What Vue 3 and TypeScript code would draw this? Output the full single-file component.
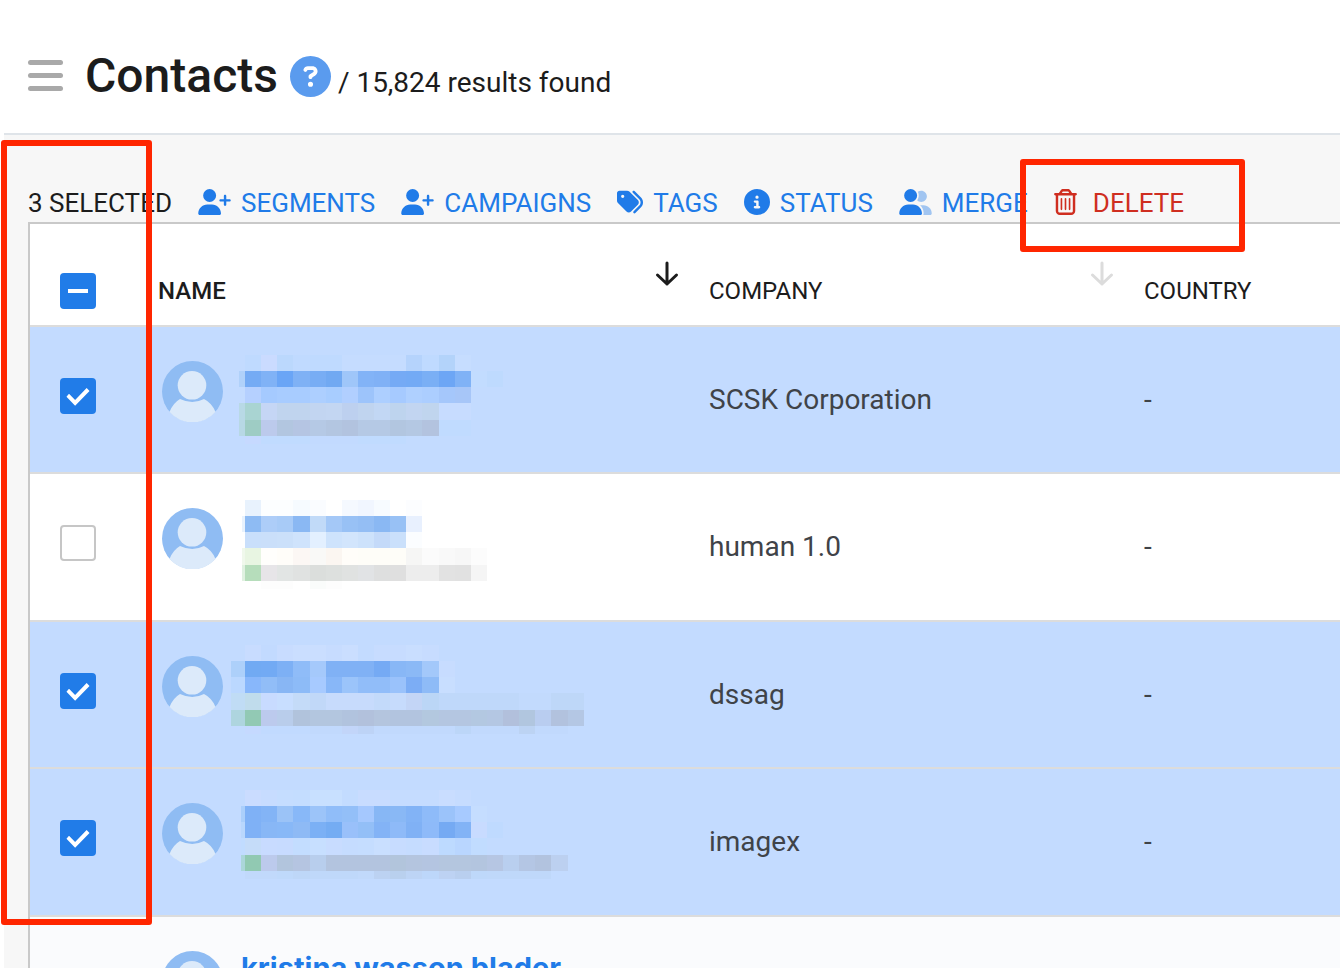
<script setup lang="ts">
import { computed, ref } from 'vue'

interface Mosaic {
  top: number
  lead: number
  leads: string[]
  rows: string[]
}
interface Contact {
  id: number
  name?: string
  company: string
  country: string
  selected: boolean
  mosaic?: Mosaic
}
interface Action {
  label: string
  icon: string
  width: number
  box: string
  path: string
  faded?: string
}
interface Tile {
  x: number
  y: number
  w: number
  h: number
  fill: string
}

const person =
  'M96 128a128 128 0 1 1 256 0A128 128 0 1 1 96 128zM0 482.3C0 383.8 79.8 304 178.3 304h91.4C368.2 304 448 383.8 448 482.3c0 16.4-13.3 29.7-29.7 29.7H29.7C13.3 512 0 498.7 0 482.3z'
const plus =
  'M504 312V248H440c-13.3 0-24-10.7-24-24s10.7-24 24-24h64V136c0-13.3 10.7-24 24-24s24 10.7 24 24v64h64c13.3 0 24 10.7 24 24s-10.7 24-24 24H552v64c0 13.3-10.7 24-24 24s-24-10.7-24-24z'

const actions: Action[] = [
  { label: 'SEGMENTS', icon: 'segments', width: 33, box: '0 0 640 512', path: person + plus },
  { label: 'CAMPAIGNS', icon: 'campaigns', width: 33, box: '0 0 640 512', path: person + plus },
  {
    label: 'TAGS',
    icon: 'tags',
    width: 26,
    box: '0 0 512 512',
    path: 'M345 39.1L472.8 168.4c52.4 53 52.4 138.2 0 191.2L360.8 472.9c-9.3 9.4-24.5 9.5-33.9 .2s-9.5-24.5-.2-33.9L438.6 325.9c33.9-34.3 33.9-89.4 0-123.7L310.9 72.9c-9.3-9.4-9.2-24.6 .2-33.9s24.6-9.2 33.9 .2zM0 229.5V80C0 53.5 21.5 32 48 32H197.5c17 0 33.3 6.7 45.3 18.7l168 168c25 25 25 65.5 0 90.5L277.3 442.7c-25 25-65.5 25-90.5 0l-168-168C6.7 262.7 0 246.5 0 229.5zM144 144a32 32 0 1 0 -64 0 32 32 0 1 0 64 0z',
  },
  {
    label: 'STATUS',
    icon: 'status',
    width: 26,
    box: '0 0 512 512',
    path: 'M256 512A256 256 0 1 0 256 0a256 256 0 1 0 0 512zM216 336h24V272H216c-13.3 0-24-10.7-24-24s10.7-24 24-24h48c13.3 0 24 10.7 24 24v88h8c13.3 0 24 10.7 24 24s-10.7 24-24 24H216c-13.3 0-24-10.7-24-24s10.7-24 24-24zm40-208a32 32 0 1 1 0 64 32 32 0 1 1 0-64z',
  },
  {
    label: 'MERGE',
    icon: 'merge',
    width: 33,
    box: '0 0 640 512',
    path: person,
    faded:
      'M609.3 512H471.4c5.4-9.4 8.6-20.3 8.6-32v-8c0-60.7-27.1-115.2-69.8-151.8c2.4-.1 4.7-.2 7.1-.2h61.4C567.8 320 640 392.2 640 481.3c0 17-13.8 30.7-30.7 30.7zM432 256c-31 0-59-12.6-79.3-32.9C372.4 196.5 384 163.6 384 128c0-26.8-6.6-52.1-18.3-74.3C384.3 40.1 407.2 32 432 32c61.9 0 112 50.1 112 112s-50.1 112-112 112z',
  },
  {
    label: 'DELETE',
    icon: 'delete',
    width: 23,
    box: '0 0 448 512',
    path: 'M170.5 51.6L151.5 80h145l-19-28.4c-1.5-2.2-4-3.6-6.7-3.6H177.1c-2.7 0-5.2 1.3-6.7 3.6zm147-26.6L354.2 80H368h48 8c13.3 0 24 10.7 24 24s-10.7 24-24 24h-8V432c0 44.2-35.8 80-80 80H112c-44.2 0-80-35.8-80-80V128H24c-13.3 0-24-10.7-24-24S10.7 80 24 80h8H80 93.8l36.7-55.1C140.9 9.4 158.4 0 177.1 0h93.7c18.7 0 36.2 9.4 46.6 24.9zM80 128V432c0 17.7 14.3 32 32 32H336c17.7 0 32-14.3 32-32V128H80zm80 64V400c0 8.8-7.2 16-16 16s-16-7.2-16-16V192c0-8.8 7.2-16 16-16s16 7.2 16 16zm80 0V400c0 8.8-7.2 16-16 16s-16-7.2-16-16V192c0-8.8 7.2-16 16-16s16 7.2 16 16zm80 0V400c0 8.8-7.2 16-16 16s-16-7.2-16-16V192c0-8.8 7.2-16 16-16s16 7.2 16 16z',
  },
]

// Each mosaic row lists tile colours from left to right; '-' leaves a tile empty.
const contacts = ref<Contact[]>([
  {
    id: 1,
    company: 'SCSK Corporation',
    country: '-',
    selected: true,
    mosaic: {
      top: 28,
      lead: 6,
      leads: ['-', 'b0d1fa', '-', 'b8d9e6', 'b7d8e5', '-'],
      rows: [
        'bfdaff cadbff bbd8fd c0daff bfdaff bfdaff c5dcff c5dcff c5dcff c5dcff b5d3fc bfdaff b3d3fa c6ddff',
        '75abf4 80b2f6 6aa5f6 7fb1f5 78adf4 71a9f2 9fc6f9 82b3f7 80b1f6 75aaf5 73aaf5 7aaff5 6da6f5 80b2f6 c2dcff bedafe',
        'b5d0ff a5caff a8ccff a8ccff adcfff a8cdff b1cfff 9dc4fb adcfff a6caff afd0ff acceff a5c7fb a7c6f8',
        'a9d4d2 c5d6f5 c0d4ee c0d4ee c2d5f1 c3d6f2 bdd0ef c0d4ef c2d7f4 bed4ee c2d5f1 c0d5ee c7dcff c7dcff',
        '9eccc4 bccaec b2c6e0 b5c5e3 b5c9e5 b3c6e1 b2c3df b5c9e5 b5c9e5 b2c6e0 b4c8e3 b3c3df c0dbff c0dbff',
        'c6d9ff c0dbff c0dbff c0dbff c2daff c2daff c2daff c0dbff c0dbff c0dbff',
      ],
    },
  },
  {
    id: 2,
    company: 'human 1.0',
    country: '-',
    selected: false,
    mosaic: {
      top: 26,
      lead: 3,
      leads: ['-', 'e8f2fd', '-', 'f0f8ec', 'e0f1e1', '-'],
      rows: [
        'e8f2fd fcfeff fcfeff f6fbff fafcff - f5f9ff f1f6ff f7fbff - fcfdff',
        '8ebbf3 adcdf8 a8cbf7 8ab8f3 c1daf8 a4c8f7 98c1f5 94bef4 8ab8f3 98c1f5 e8f0fe',
        'c9dffb cadffa cbe0fa cfe3fc e3f0ff cee3fc d2e5fc cde2fb c4daf9 cae0fb fbfdff',
        'e8f5e2 fffefc fffdf9 fcf7f4 f9f9f7 fbf6f1 fffdf9 fefdf8 fefdf8 fefdf8 f6f6f5 fbfbfb f9f9f9 f7f7f7 fcfcfc',
        'b6ddbb e7e5e8 e2e5e4 e0e2e1 dbdedc dde0de e0e2e1 e1e3e5 dedfdf dfdfdf ededed ededed e2e2e2 e1e1e1 f5f5f5',
        '- fdfdfd fdfdfd - fafcfb fdfdfd',
      ],
    },
  },
  {
    id: 3,
    company: 'dssag',
    country: '-',
    selected: true,
    mosaic: {
      top: 23,
      lead: 14,
      leads: ['-', 'add0fa', 'bbd8ff', 'c0dcf5', 'aed5df', '-'],
      rows: [
        'c8dcff c2daff c8dcff cadeff cadeff c7dcff cadeff c3dbff c7dcff c7dcff c9deff c7dcff',
        '71aaf3 72aaf4 7db0f5 8fbcf8 a5c9fb 80b1f5 80b1f5 80b1f5 75aaf4 88b7f6 8bb9f6 a3c8fa c7dcff',
        '88b7fb 91bdf7 88b6f4 8dbbf7 a7caff 88b7f8 9bc4fa 91bdf9 91bdf9 9ac2fb 7cadf5 8ebbf7 c8deff',
        'c0dcec c8dbff c8deff c4dbf8 c1d8f8 c7dbfc c7dbfc c7dbfc c3dafa c6dbfc c3d5f6 bbd6f6 bfd8fa bfd8fa bfd8fa bfd8fa bfd8fa c2dafd c2dafd bed7f8 bed7f8',
        '92c9b4 bccaed b9cdeb b1c3dc b3c6df b3c6df b1c3de b2c1dc b4c5de b2c4df b2c4df b3c8df b4c6e1 b4c6e1 b3c8e1 b4c7e3 b2c0dc b1c6df b9cdf0 b2c2de b4c7e4',
        'c5d9ff c1daff c1daff c1daff c1d9fd c1d9fd c2d5f9 bdd3f6 c1d9fd c1d9fd c1d9fd c1d9fd c1d9fd bcd6f8 c1d9fd c1d9fd c1d9fd bcd3f3 c1d9fd c1d9fd',
      ],
    },
  },
  {
    id: 4,
    company: 'imagex',
    country: '-',
    selected: true,
    mosaic: {
      top: 21,
      lead: 4,
      leads: ['-', 'abcffb', 'b9d7fd', 'c1dcff', 'abd6da', '-'],
      rows: [
        'cadcff c7dcff c5ddff c4ddff c8e0ff c8e0ff c3dcff c8dcff c8dcff c5dcff c5dcff c5dcff c9ddff c6dcff',
        '7fb1f6 83b4f6 9bc3f7 88b8f8 9cc4f9 90bdf9 93bff8 a5c8fe 87b7f5 89b8f5 82b3f6 8ebbf9 9bc3fa a7caff c5ddff',
        '7fb1f6 88b7f6 88b8f7 8ebaf5 7bb0f5 74acf3 99c0fa 93bff7 83b3f6 8ebaf8 80b1f5 8ebaf9 75aaf3 82b3f6 c8dbff bfdaff',
        'c5dcf9 c8dbff c7dbff c3ddff c7dfff c8dcff c5dcff c5ddff c9dfff c7dcff c5dcff c8dcff bddaff b9d6ff c1dcff',
        '91c9b2 bccaec b2c5dd b5c5e1 b8ceed b3c4df b3c4df b3c4df b3c4df b2c5dc b4c5df b4c5e1 b4c6df b4c6df b3c5df b6c6e3 b9cfef b4c6e4 b2c3df bcd0f0',
        'c1d9fb c1d9fb bfd9fb bed7f8 bfd8fa bfd8fa bfd8fa c1d9fb bcd2f2 b9d0ee bdd4f5 bdd7fa bdd2f3 b9cfef bed8fa bfd8fa bfd8fa bfd8fa bfd8fa',
      ],
    },
  },
  { id: 5, name: 'kristina wasson blader', company: '', country: '', selected: false },
])

const selectedCount = computed(() => contacts.value.filter((c) => c.selected).length)

function toggleAll(event: Event): void {
  const on = (event.target as HTMLInputElement).checked
  contacts.value.forEach((c) => (c.selected = on))
}

function tiles(m: Mosaic): Tile[] {
  const left = 16
  const edge = (n: number) => Math.round((n * 129) / 8)
  const out: Tile[] = []
  m.rows.forEach((row, r) => {
    const y = m.top + edge(r)
    const h = r === 5 ? 8 : edge(r + 1) - edge(r)
    if (m.leads[r] !== '-') {
      out.push({ x: left - m.lead, y, w: m.lead, h, fill: '#' + m.leads[r] })
    }
    row.split(' ').forEach((c, i) => {
      if (c !== '-') {
        out.push({ x: left + edge(i), y, w: edge(i + 1) - edge(i), h, fill: '#' + c })
      }
    })
  })
  return out
}
</script>

<template>
  <div class="page">
    <header class="header">
      <button class="menu" type="button" aria-label="Menu"><i></i><i></i><i></i></button>
      <h1>Contacts</h1>
      <button class="help" type="button" aria-label="Help">
        <svg viewBox="0 0 512 512" aria-hidden="true">
          <path
            d="M256 512A256 256 0 1 0 256 0a256 256 0 1 0 0 512zM169.8 165.3c7.9-22.3 29.1-37.3 52.8-37.3h58.3c34.9 0 63.1 28.3 63.1 63.1c0 22.6-12.1 43.5-31.7 54.8L280 264.4c-.2 13-10.9 23.6-24 23.6c-13.3 0-24-10.7-24-24V250.5c0-8.6 4.6-16.5 12.1-20.8l44.3-25.4c4.7-2.7 7.6-7.7 7.6-13.1c0-8.4-6.8-15.1-15.1-15.1H222.6c-3.4 0-6.4 2.1-7.5 5.3l-.4 1.2c-4.4 12.5-18.2 19-30.6 14.6s-19-18.2-14.6-30.6l.4-1.2zM224 352a32 32 0 1 1 64 0 32 32 0 1 1 -64 0z"
          />
        </svg>
      </button>
      <p class="results">/ 15,824 results found</p>
    </header>

    <main class="content">
      <div class="toolbar">
        <span class="count">{{ selectedCount }} SELECTED</span>
        <button
          v-for="a in actions"
          :key="a.icon"
          type="button"
          class="action"
          :class="{ danger: a.icon === 'delete' }"
        >
          <svg :viewBox="a.box" :width="a.width" height="26" aria-hidden="true">
            <path v-if="a.faded" class="faded" :d="a.faded" />
            <path :d="a.path" />
          </svg>
          <span>{{ a.label }}</span>
        </button>
      </div>

      <table class="contacts">
        <colgroup>
          <col class="col-check" />
          <col class="col-name" />
          <col class="col-company" />
          <col />
        </colgroup>
        <thead>
          <tr>
            <th class="check">
              <input
                type="checkbox"
                aria-label="Select all"
                :indeterminate="selectedCount > 0"
                @change="toggleAll"
              />
            </th>
            <th class="sorted">
              <div class="head">
                <span>NAME</span>
                <svg class="arrow" viewBox="0 0 24 26" aria-hidden="true">
                  <path d="M12 2v21M2.500 14L12 23l9.500-9" />
                </svg>
              </div>
            </th>
            <th>
              <div class="head">
                <span>COMPANY</span>
                <svg class="arrow" viewBox="0 0 24 26" aria-hidden="true">
                  <path d="M12 2v21M2.500 14L12 23l9.500-9" />
                </svg>
              </div>
            </th>
            <th><div class="head"><span>COUNTRY</span></div></th>
          </tr>
        </thead>
        <tbody>
          <tr v-for="c in contacts" :key="c.id" :class="{ selected: c.selected }">
            <td class="check">
              <input v-model="c.selected" type="checkbox" aria-label="Select contact" />
            </td>
            <td>
              <div class="person">
                <svg class="avatar" viewBox="0 0 61 61" aria-hidden="true">
                  <circle class="disc" cx="30.500" cy="30.500" r="30.500" />
                  <circle class="figure" cx="30" cy="24.300" r="14.300" />
                  <path
                    class="figure"
                    d="M18 38Q30.500 44 42 38Q50 42 53.500 51A30.500 30.500 0 0 1 7.500 51Q11 42 18 38z"
                  />
                </svg>
                <a v-if="c.name" href="#" class="name">{{ c.name }}</a>
                <svg v-if="c.mosaic" class="mosaic" viewBox="0 0 400 144" aria-hidden="true">
                  <rect
                    v-for="(t, i) in tiles(c.mosaic)"
                    :key="i"
                    :x="t.x"
                    :y="t.y"
                    :width="t.w"
                    :height="t.h"
                    :fill="t.fill"
                  />
                </svg>
              </div>
            </td>
            <td><div class="value">{{ c.company }}</div></td>
            <td><div class="value">{{ c.country }}</div></td>
          </tr>
        </tbody>
      </table>
    </main>

    <div class="marker marker-rows"></div>
    <div class="marker marker-delete"></div>
  </div>
</template>

<style>
body {
  margin: 0;
  background: #fff;
}
</style>

<style scoped>
.page {
  position: relative;
  box-sizing: border-box;
  height: 100vh;
  overflow: hidden;
  padding-left: 4px;
  background: #fff;
  color: #1c1c1c;
  font-family: Roboto, 'Liberation Sans', sans-serif;
}
button {
  padding: 0;
  border: 0;
  background: none;
  color: inherit;
  font: inherit;
  cursor: pointer;
}
.header {
  display: flex;
  align-items: center;
  box-sizing: border-box;
  height: 135px;
  padding: 18px 24px 0;
  border-bottom: 2px solid #dfe4e9;
}
.menu {
  display: flex;
  flex-direction: column;
  gap: 8px;
  width: 35px;
  margin-right: 22px;
}
.menu i {
  height: 5px;
  border-radius: 3px;
  background: #a9a9a9;
}
h1 {
  margin: 0 12px 0 0;
  font-size: 48px;
  line-height: 56px;
  font-weight: 500;
}
.help {
  width: 41px;
  height: 41px;
  margin: 2px 7px 0 0;
}
.help svg {
  display: block;
  fill: #5a9bee;
}
.results {
  margin: 14px 0 0;
  font-size: 28px;
  line-height: 32px;
}
.content {
  padding-left: 24px;
  background: #f7f7f7;
}
.toolbar {
  display: flex;
  align-items: center;
  gap: 26px;
  padding: 50px 0 1px;
  font-size: 26px;
  line-height: 36px;
  white-space: nowrap;
}
.action {
  display: flex;
  align-items: center;
  gap: 10px;
  color: #207be8;
}
.action svg {
  flex: none;
  margin-bottom: 2px;
  fill: currentColor;
}
.faded {
  opacity: 0.4;
}
.danger {
  gap: 16px;
  color: #cf2e20;
}
.contacts {
  width: 100%;
  table-layout: fixed;
  border-collapse: separate;
  border-spacing: 0;
  border-top: 2px solid #c9c9c9;
  border-left: 2px solid #c9c9c9;
  background: #fff;
}
.col-check {
  width: 128px;
}
.col-name {
  width: 551px;
}
.col-company {
  width: 435px;
}
th,
td {
  box-sizing: border-box;
  padding: 0;
  border-bottom: 2px solid #dcdcdc;
  text-align: left;
  vertical-align: top;
}
th {
  height: 103px;
  font-size: 24px;
  line-height: 28px;
  font-weight: 400;
}
td {
  height: 148px;
  font-size: 28px;
  line-height: 32px;
  color: #3f4348;
}
tbody tr:nth-child(odd) td {
  height: 147px;
}
tbody tr:last-child {
  background: #fafbfd;
}
tbody tr.selected {
  background: #c3dbff;
}
.head {
  display: flex;
  justify-content: space-between;
  padding: 37px 30px 0 0;
}
.head span {
  padding-top: 16px;
}
.sorted {
  font-weight: 500;
}
.arrow {
  width: 24px;
  height: 26px;
  fill: none;
  stroke: #dcdcdc;
  stroke-width: 3;
  stroke-linecap: round;
  stroke-linejoin: round;
}
.sorted .arrow {
  stroke: #1c1c1c;
}
.check {
  padding: 51px 0 0 30px;
}
th.check {
  padding-top: 49px;
}
tbody tr:last-child .check input {
  visibility: hidden;
}
input {
  display: block;
  position: relative;
  appearance: none;
  box-sizing: border-box;
  width: 36px;
  height: 36px;
  margin: 0;
  border: 2px solid #c6c6c6;
  border-radius: 4px;
  background: #fff;
}
input:checked,
input:indeterminate {
  border: 0;
  background: #217ce8;
}
input:checked::before,
input:indeterminate::before {
  content: '';
  display: block;
  width: 36px;
  height: 36px;
  background: #fff;
  clip-path: polygon(18% 52%, 25% 44%, 42% 61%, 74% 28%, 82% 36%, 42% 77%);
}
input:indeterminate::before {
  clip-path: inset(16px 8px);
}
.person {
  display: flex;
  align-items: flex-start;
  padding-left: 4px;
}
.avatar {
  flex: none;
  width: 61px;
  height: 61px;
  margin-top: 34px;
}
.disc {
  fill: #8fbcf3;
}
.figure {
  fill: #dceafa;
}
.mosaic {
  flex: none;
  width: 400px;
  height: 144px;
  margin-left: 6px;
  shape-rendering: crispEdges;
}
.name {
  margin: 35px 0 0 18px;
  color: #207be8;
  font-family: Inter, Roboto, sans-serif;
  font-size: 29px;
  font-weight: 700;
  text-decoration: none;
  white-space: nowrap;
}
.value {
  padding-top: 57px;
}
.marker {
  position: absolute;
  box-sizing: border-box;
  border: 6px solid #ff2600;
  border-radius: 3px;
  pointer-events: none;
}
.marker-rows {
  top: 140px;
  left: 1px;
  width: 151px;
  height: 785px;
}
.marker-delete {
  top: 159px;
  left: 1020px;
  width: 225px;
  height: 93px;
}
</style>
